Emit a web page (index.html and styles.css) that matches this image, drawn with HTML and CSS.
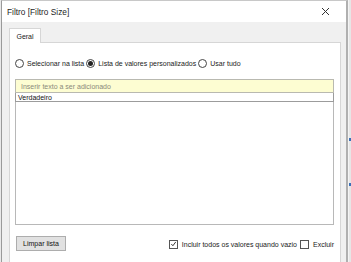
FILE: index.html
```html
<!DOCTYPE html>
<html>
<head>
<meta charset="utf-8">
<link rel="stylesheet" href="styles.css">
</head>
<body>
<div class="screen">
  <div class="window">
    <div class="titlebar">
      <span class="title">Filtro [Filtro Size]</span>
      <svg class="close" width="9" height="9" viewBox="0 0 9 9"><path d="M1 1L8 8M8 1L1 8" stroke="#333" stroke-width="1"/></svg>
    </div>
    <div class="body">
      <div class="tabs"><div class="tab">Geral</div></div>
      <div class="panel">
        <div class="radios">
          <label class="opt"><span class="radio"></span>Selecionar na lista</label>
          <label class="opt"><span class="radio on"></span>Lista de valores personalizados</label>
          <label class="opt"><span class="radio"></span>Usar tudo</label>
        </div>
        <div class="inputbox">Inserir texto a ser adicionado</div>
        <div class="list">
          <div class="item">Verdadeiro</div>
        </div>
        <div class="footer">
          <div class="btn">Limpar lista</div>
          <div class="checks">
            <label class="opt"><span class="check"><svg width="8" height="8" viewBox="0 0 8 8"><path d="M1.5 4L3.3 6L6.6 1.6" fill="none" stroke="#333" stroke-width="1.1"/></svg></span>Incluir todos os valores quando vazio</label>
            <label class="opt"><span class="check"></span>Excluir</label>
          </div>
        </div>
      </div>
    </div>
  </div>
  <div class="outside">
    <div class="mark m1"></div>
    <div class="mark m2"></div>
  </div>
</div>
</body>
</html>
```

FILE: styles.css
```css
* { box-sizing: border-box; }
html, body { margin: 0; padding: 0; }
body {
  width: 351px;
  height: 262px;
  overflow: hidden;
  background: #e9e9e9;
  font-family: "Liberation Sans", Arial, sans-serif;
  font-size: 7px;
  color: #1a1a1a;
}
.screen {
  display: flex;
  height: 262px;
}
.window {
  width: 347px;
  margin-left: 1px;
  height: 262px;
  border-left: 1px solid #9a9a9a;
  border-right: 2px solid #b0b0b0;
  border-top: 1px solid #c8c8c8;
  background: #f0f0f0;
  display: flex;
  flex-direction: column;
}
.titlebar {
  height: 21px;
  background: #fff;
  display: flex;
  align-items: center;
  justify-content: space-between;
  padding: 0 16px 0 5px;
  flex: none;
}
.title {
  font-size: 8.3px;
  color: #1e1e1e;
  margin-top: 1px;
}
.close { display: block; }
.body {
  flex: 1;
  display: flex;
  flex-direction: column;
  padding: 6px 5px 0 7px;
}
.tabs {
  display: flex;
  height: 14px;
  flex: none;
}
.tab {
  width: 32px;
  height: 15px;
  background: #fff;
  border: 1px solid #d6d6d6;
  border-bottom: none;
  display: flex;
  align-items: center;
  justify-content: center;
  padding-top: 1px;
  position: relative;
  z-index: 1;
}
.panel {
  flex: 1;
  background: #fff;
  border: 1px solid #d6d6d6;
  border-bottom: none;
  padding: 15px 6px 0 5px;
  display: flex;
  flex-direction: column;
}
.radios {
  display: flex;
  align-items: center;
  height: 11px;
}
.opt {
  display: flex;
  align-items: center;
  white-space: nowrap;
}
.radio {
  width: 9px;
  height: 9px;
  border: 1px solid #444;
  border-radius: 50%;
  margin: 0 3px 0 0;
  display: inline-flex;
  align-items: center;
  justify-content: center;
  background: #fff;
}
.radio.on::after {
  content: "";
  width: 5px;
  height: 5px;
  border-radius: 50%;
  background: #222;
}
.radios .opt + .opt { margin-left: 2px; }
.inputbox {
  margin-top: 10px;
  height: 14px;
  background: #fdfdd2;
  border: 1px solid #b9b9b0;
  color: #8a8a7a;
  padding: 1px 0 0 5px;
  display: flex;
  align-items: center;
}
.list {
  height: 132px;
  border: 1px solid #b8b8b8;
  border-top: none;
  flex: none;
}
.item {
  height: 9px;
  border: 1px solid #9c9c9c;
  border-top: none;
  margin: 0 -1px;
  padding-left: 2px;
  display: flex;
  align-items: center;
  line-height: 1;
  color: #111;
}
.footer {
  display: flex;
  align-items: center;
  justify-content: space-between;
  margin-top: 11px;
  padding-left: 1px;
}
.btn {
  width: 50px;
  height: 15px;
  background: #e1e1e1;
  border: 1px solid #adadad;
  display: flex;
  align-items: center;
  justify-content: center;
  color: #111;
}
.checks {
  display: flex;
  align-items: center;
  padding-top: 1px;
}
.check {
  width: 9px;
  height: 9px;
  border: 1px solid #555;
  background: #fff;
  margin-right: 4px;
  display: inline-flex;
  align-items: center;
  justify-content: center;
}
.check svg { display: block; }
.checks .opt + .opt { margin-left: 3px; }
.outside {
  flex: 1;
  position: relative;
  background: #e6e6e6;
  border-left: 1px solid #f4f4f4;
}
.mark {
  position: absolute;
  left: 0;
  width: 2px;
  height: 3px;
  background: #3a6fb8;
}
.m1 { top: 138px; }
.m2 { top: 183px; }
```
